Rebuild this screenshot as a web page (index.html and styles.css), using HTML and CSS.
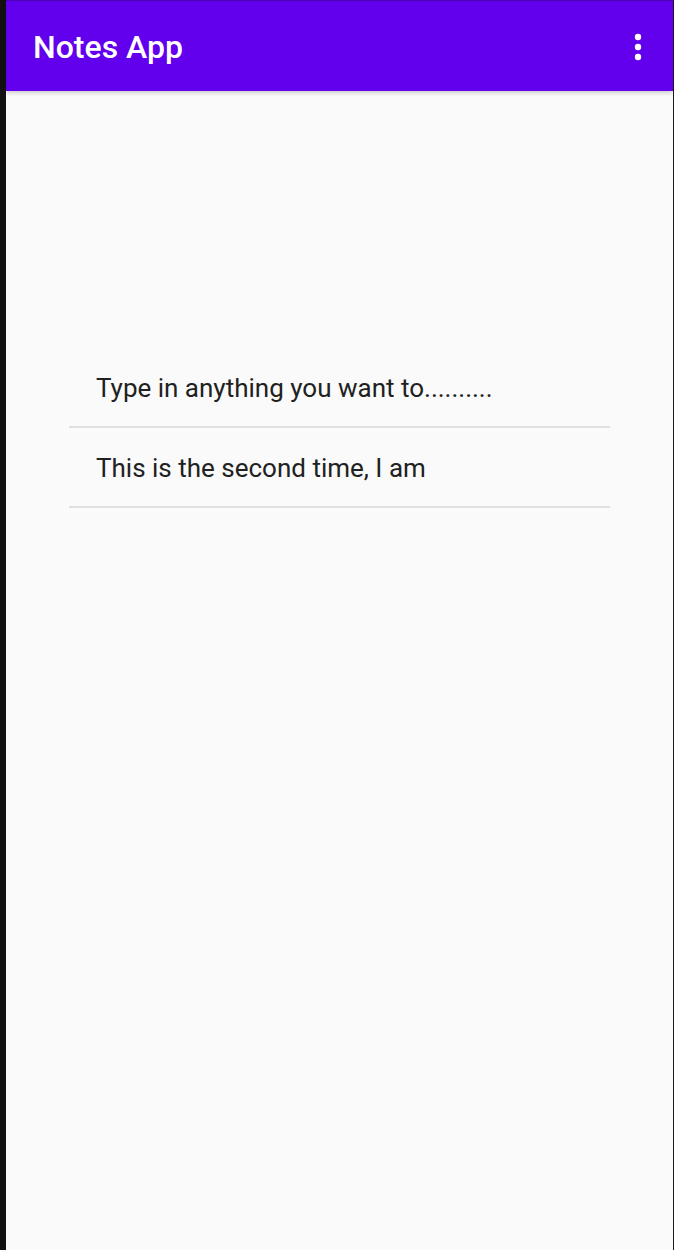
FILE: index.html
```html
<!DOCTYPE html>
<html>
<head>
<meta charset="utf-8">
<link rel="stylesheet" href="styles.css">
</head>
<body>
<div class="frame">
  <div class="edge-left"></div>
  <div class="screen">
    <header class="toolbar">
      <h1 class="title">Notes App</h1>
      <div class="menu" aria-label="More options">
        <svg width="8" height="30" viewBox="0 0 8 30">
          <circle cx="4" cy="5" r="3.2" fill="#fff"/>
          <circle cx="4" cy="15" r="3.2" fill="#fff"/>
          <circle cx="4" cy="25" r="3.2" fill="#fff"/>
        </svg>
      </div>
    </header>
    <main class="content">
      <ul class="notes">
        <li class="note">Type in anything you want to..........</li>
        <li class="note">This is the second time, I am</li>
      </ul>
    </main>
  </div>
  <div class="edge-right"></div>
</div>
</body>
</html>
```

FILE: styles.css
```css
html, body {
  margin: 0;
  padding: 0;
  height: 100%;
}
body {
  font-family: Roboto, "Noto Sans", sans-serif;
  background: #fafafa;
}
.frame {
  display: flex;
  height: 1250px;
}
.edge-left {
  width: 6px;
  background: #121012;
  flex: none;
}
.edge-right {
  width: 1px;
  background: #1a1a1a;
  flex: none;
}
.screen {
  flex: 1;
  display: flex;
  flex-direction: column;
  background: #fafafa;
  min-width: 0;
}
.toolbar {
  height: 90px;
  border-top: 1px solid #4b00b8;
  background: #6200ee;
  display: flex;
  align-items: center;
  justify-content: space-between;
  padding: 0 31px 0 27px;
  box-shadow: 0 2px 4px rgba(0,0,0,0.18);
  position: relative;
  z-index: 1;
  flex: none;
}
.title {
  margin: 0;
  color: #fff;
  font-size: 32px;
  font-weight: 500;
  letter-spacing: 0;
  line-height: 1;
  padding-top: 2px;
}
.menu {
  display: flex;
  align-items: center;
  height: 30px;
  margin-top: 1px;
}
.menu svg {
  display: block;
}
.content {
  flex: 1;
  padding-top: 257px;
}
.notes {
  list-style: none;
  margin: 0 63px 0 63px;
  padding: 0;
}
.note {
  height: 80px;
  display: flex;
  align-items: center;
  padding-left: 27px;
  padding-top: 2px;
  box-sizing: border-box;
  border-bottom: 2px solid #e0e0e0;
  font-size: 26px;
  color: #212121;
}
```
